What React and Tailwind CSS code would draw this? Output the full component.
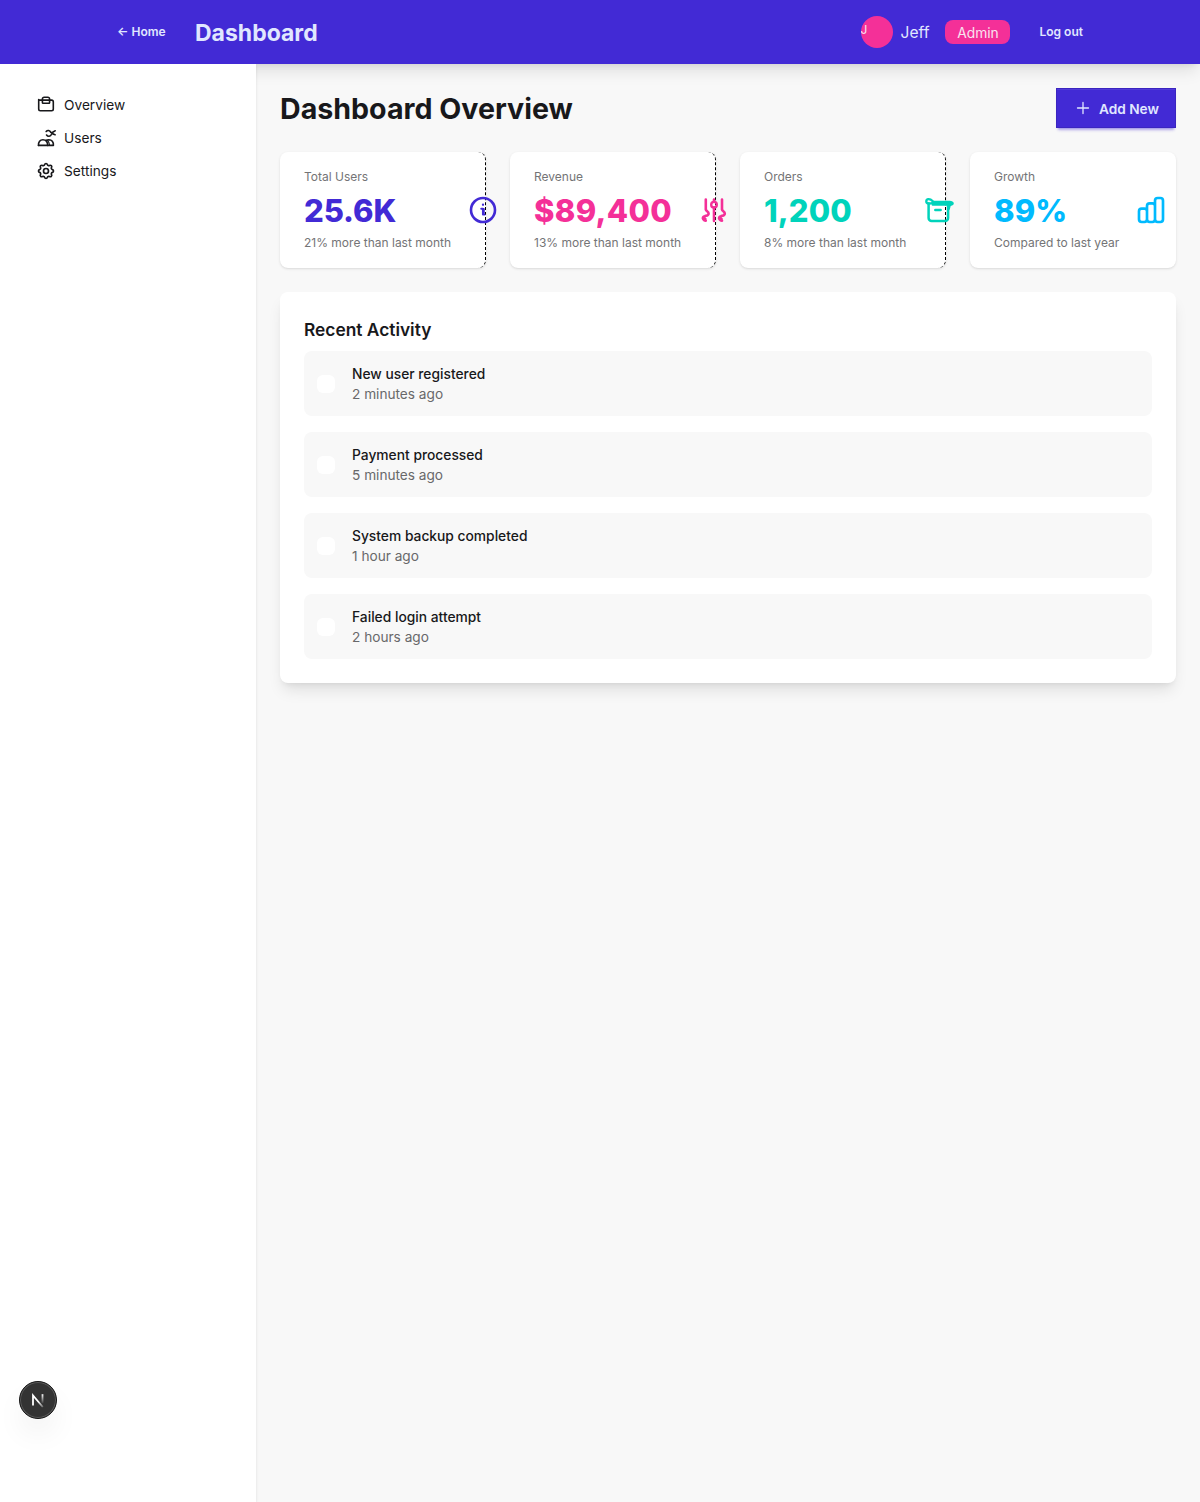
import React from "react";

const stroke = {
  fill: "none",
  stroke: "currentColor",
  strokeWidth: 2,
  strokeLinecap: "round",
  strokeLinejoin: "round",
};

const OverviewIcon = () => (
  <svg className="size-5" viewBox="0 0 20 20" {...stroke} strokeWidth={1.6}>
    <path d="M2.700 4.500V14a1.700 1.700 0 0 0 1.700 1.700h11.200a1.700 1.700 0 0 0 1.700-1.700V6.800a1.700 1.700 0 0 0-1.700-1.700H3.200" />
    <path d="M6.400 7.600V4a1.700 1.700 0 0 1 1.700-1.700h3.800A1.700 1.700 0 0 1 13.600 4v3.600a.7.7 0 0 1-.7.7H7.100a.7.7 0 0 1-.7-.7z" />
  </svg>
);

const UsersIcon = () => (
  <svg className="size-5" viewBox="0 0 20 20" {...stroke} strokeWidth={1.6}>
    <path d="M2.500 17.400h14.900c.2-3.400-1.500-5.600-4.600-5.700-1 0-1.900.2-2.700.6" />
    <path d="M2.500 17.400c-.2-3.500 1.600-5.700 4.400-5.700 2.900 0 4.700 2.200 4.800 5.700" />
    <path d="M11.500 12.500c1.200 1.100 1.900 2.700 2 4.600" strokeWidth="1.200" />
    <path d="M10.200 3.500c1.200-1.600 3.700-1.300 4.500.8M10.600 7c1.300 1.900 3.900 1.700 4.900-.8.700-1.900 1.900-2.800 3.700-3.400M15.800 4.500c.7 1.300 1.700 2 3.300 2.300" />
  </svg>
);

const SettingsIcon = () => (
  <svg className="size-5" viewBox="0 0 24 24" {...stroke}>
    <path d="M10.325 4.317c.426-1.756 2.924-1.756 3.350 0a1.724 1.724 0 002.573 1.066c1.543-.94 3.310.826 2.370 2.370a1.724 1.724 0 001.065 2.572c1.756.426 1.756 2.924 0 3.350a1.724 1.724 0 00-1.066 2.573c.94 1.543-.826 3.310-2.370 2.370a1.724 1.724 0 00-2.572 1.065c-.426 1.756-2.924 1.756-3.350 0a1.724 1.724 0 00-2.573-1.066c-1.543.94-3.310-.826-2.370-2.370a1.724 1.724 0 00-1.065-2.572c-1.756-.426-1.756-2.924 0-3.350a1.724 1.724 0 001.066-2.573c-.94-1.543.826-3.310 2.370-2.370.996.608 2.296.07 2.572-1.065z" />
    <path d="M15 12a3 3 0 11-6 0 3 3 0 016 0z" />
  </svg>
);

const InfoIcon = () => (
  <svg className="size-8" viewBox="0 0 32 32" {...stroke}>
    <circle cx="16" cy="16" r="12" strokeWidth="2.600" />
    <path d="M16 10.700v.1" strokeWidth="2.300" />
    <path d="M14.200 14.700h1.700v5.900h1.800M16.800 15v5.400" strokeWidth="1.900" />
  </svg>
);

const SlidersIcon = () => (
  <svg className="size-8" viewBox="0 0 32 32" {...stroke} strokeWidth={2.6}>
    <path d="M7.800 5.500V15.500c.2 1.700 2.800 1.800 2.800 3.900 0 2.300-2.300 2.200-3.900 2.800-1.900.6-2.300 1.800-1.400 3 .7 1 1.600 1.500 2.500 1.400M6 24l1.300.8" />
    <path d="M24 5.500V15.500c.2 1.700 2.800 1.800 2.800 3.900 0 2.300-2.300 2.200-3.900 2.800-1.900.6-2.300 1.800-1.400 3 .7 1 1.600 1.500 2.500 1.400M22.200 24l1.300.8" />
    <path d="M16 5.500v2.300M16 13.500v13.400" />
    <circle cx="16" cy="10.700" r="2.800" strokeWidth="2.400" />
  </svg>
);

const ArchiveIcon = () => (
  <svg className="size-8" viewBox="0 0 32 32" {...stroke} strokeWidth={2.5}>
    <path d="M5.600 9.500v14.500a3 3 0 0 0 3 3h13.500a3 3 0 0 0 3-3V10" />
    <path d="M5.300 9.500C2.400 8.900 2.800 5.500 5.400 5.200c2.200-.2 3 .7 4.300 2 .9 1.200.3 2.400-4.400 2.300z" strokeWidth="2.300" />
    <path d="M9.500 7.500h17.500c2.500.2 3.600 1.600 2.700 2.700l-2.700 1.200c-.3 1-.4 3.700-1.700 4.800V11H9.500z" fill="currentColor" strokeWidth="1.600" />
    <path d="M12.300 16h5.300" />
  </svg>
);

const ChartIcon = () => (
  <svg className="size-8" viewBox="0 0 24 24" {...stroke}>
    <path d="M9 19v-6a2 2 0 00-2-2H5a2 2 0 00-2 2v6a2 2 0 002 2h2a2 2 0 002-2zm0 0V9a2 2 0 012-2h2a2 2 0 012 2v10m-6 0a2 2 0 002 2h2a2 2 0 002-2m0 0V5a2 2 0 012-2h2a2 2 0 012 2v14a2 2 0 01-2 2h-2a2 2 0 01-2-2z" />
  </svg>
);

const NavItem = ({ icon, label }) => (
  <li className="flex h-[33px] items-center gap-2 px-3 text-[13.7px]">
    {icon}
    <span className="pt-0.5">{label}</span>
  </li>
);

const stats = [
  { title: "Total Users", value: "25.6K", note: "21% more than last month", color: "text-[#422ad5] tracking-[-0.1px]", pos: "-right-[13px]", icon: <InfoIcon /> },
  { title: "Revenue", value: "$89,400", note: "13% more than last month", color: "text-[#f43098] tracking-[0.3px]", pos: "-right-[14px]", icon: <SlidersIcon /> },
  { title: "Orders", value: "1,200", note: "8% more than last month", color: "text-[#00d3bb] tracking-[0.1px]", pos: "-right-[9px]", icon: <ArchiveIcon /> },
  { title: "Growth", value: "89%", note: "Compared to last year", color: "text-[#00bafe] tracking-[0.1px]", pos: "right-[9px]", icon: <ChartIcon />, last: true },
];

const activity = [
  ["New user registered", "2 minutes ago"],
  ["Payment processed", "5 minutes ago"],
  ["System backup completed", "1 hour ago"],
  ["Failed login attempt", "2 hours ago"],
];

const StatCard = ({ title, value, note, color, pos, icon, last }) => (
  <div className="relative h-[116px] rounded-lg bg-white shadow-sm">
    <div className={last ? "h-full rounded-lg px-6 py-4" : "h-full rounded-lg border-r border-dashed border-black px-6 py-4"}>
      <div className="whitespace-nowrap text-xs leading-[18px] text-[#747476]">{title}</div>
      <div className={"h-12 whitespace-nowrap text-[31px] leading-[49px] font-extrabold " + color}>{value}</div>
      <div className="whitespace-nowrap text-xs leading-[18px] text-[#747476]">{note}</div>
    </div>
    <div className={"absolute top-[42px] " + color + " " + pos}>{icon}</div>
  </div>
);

export default function App() {
  return (
    <div className="flex h-[1502px] flex-col bg-[#f8f8f8] text-[#18181b] font-[Inter,sans-serif]">
      <header className="z-10 flex h-16 shrink-0 items-center bg-[#422ad5] pr-[117px] pl-[117px] text-[#e0e7ff] shadow-lg">
        <span className="w-[78px] text-xs font-semibold">← Home</span>
        <span className="pt-0.5 text-[23px] leading-8 font-bold">Dashboard</span>
        <div className="ml-auto flex items-center">
          <div className="size-8 overflow-hidden rounded-full bg-[#f43098] pt-[6px] text-xs leading-4 text-[#f9e4f0]">J</div>
          <span className="ml-2 pt-0.5 text-[15.6px] leading-6">Jeff</span>
          <span className="ml-4 flex h-6 w-[65px] items-center justify-center rounded-lg bg-[#f43098] pt-0.5 text-[13.8px] text-[#f9e4f0]">Admin</span>
          <span className="ml-[29px] text-xs font-semibold">Log out</span>
        </div>
      </header>

      <div className="flex min-h-0 flex-1">
        <aside className="relative z-20 w-64 shrink-0 bg-white px-6 pt-6 shadow-sm [clip-path:inset(0_-4px_0_0)]">
          <ul>
            <NavItem icon={<OverviewIcon />} label="Overview" />
            <NavItem icon={<UsersIcon />} label="Users" />
            <NavItem icon={<SettingsIcon />} label="Settings" />
          </ul>
          <div className="absolute bottom-[83px] left-[19px] flex size-[38px] items-center justify-center rounded-full border border-[#171717] bg-[#333] shadow-[inset_0_0_0_1px_#5a5a5a,0_16px_32px_-8px_rgba(0,0,0,0.14)]">
            <svg className="size-4" viewBox="0 0 16 16" fill="none" strokeWidth="1.800">
              <defs>
                <linearGradient id="diagonal" x1="9" y1="9" x2="14" y2="15" gradientUnits="userSpaceOnUse">
                  <stop stopColor="#fff" />
                  <stop offset="1" stopColor="#fff" stopOpacity="0.200" />
                </linearGradient>
                <linearGradient id="stem" x1="12" y1="2" x2="12" y2="12" gradientUnits="userSpaceOnUse">
                  <stop stopColor="#fff" />
                  <stop offset="1" stopColor="#fff" stopOpacity="0" />
                </linearGradient>
              </defs>
              <path d="M3 13.500V3.500L12.800 15" stroke="url(#diagonal)" />
              <path d="M12.500 2.200v9" stroke="url(#stem)" />
            </svg>
          </div>
        </aside>

        <main className="min-w-0 flex-1 p-6">
          <div className="mb-6 flex h-10 items-center justify-between">
            <h1 className="pt-px text-[28.6px] leading-9 font-bold">Dashboard Overview</h1>
            <button className="flex h-10 w-[120px] items-center justify-end gap-2 border border-[#3b25c0] bg-[#422ad5] pr-4 text-[13.7px] font-semibold text-[#e0e7ff] shadow-[inset_0_1px_0_rgba(255,255,255,0.08),0_3px_2px_-2px_rgba(66,42,213,0.3),0_4px_3px_-2px_rgba(66,42,213,0.3)]">
              <svg className="size-4" viewBox="0 0 16 16" {...stroke} strokeWidth={1.300}>
                <path d="M8 2.500v11M2.500 8h11" />
              </svg>
              <span className="pt-0.5">Add New</span>
            </button>
          </div>

          <div className="mb-6 grid grid-cols-4 gap-6">
            {stats.map((s) => (
              <StatCard key={s.title} {...s} />
            ))}
          </div>

          <section className="h-[391px] rounded-lg bg-white p-6 shadow-lg">
            <h2 className="mb-2 pt-px text-[17.35px] leading-[26px] font-semibold">Recent Activity</h2>
            <ul className="flex flex-col gap-4">
              {activity.map(([name, time]) => (
                <li key={name} className="flex h-[65px] items-center rounded-lg bg-[#f8f8f8] px-[13px] text-[13.8px]">
                  <span className="size-[18px] rounded-md bg-white" />
                  <div className="ml-[17px] leading-5">
                    <p className="font-medium">{name}</p>
                    <p className="text-[13.65px] text-[#68686a]">{time}</p>
                  </div>
                </li>
              ))}
            </ul>
          </section>
        </main>
      </div>
    </div>
  );
}
